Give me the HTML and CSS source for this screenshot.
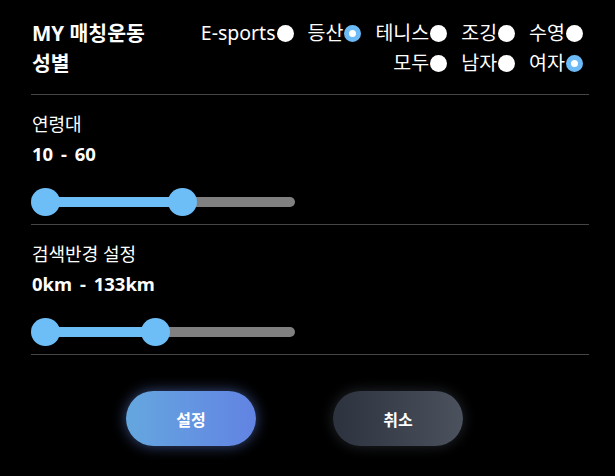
FILE: index.html
```html
<!DOCTYPE html>
<html lang="ko">
<head>
<meta charset="utf-8">
<link rel="stylesheet" href="styles.css">
</head>
<body>
<div class="panel">
  <div class="header">
    <div class="row">
      <div class="title">MY 매칭운동</div>
      <div class="options">
        <label class="opt">E-sports<span class="radio"></span></label>
        <label class="opt">등산<span class="radio checked"></span></label>
        <label class="opt">테니스<span class="radio"></span></label>
        <label class="opt">조깅<span class="radio"></span></label>
        <label class="opt">수영<span class="radio"></span></label>
      </div>
    </div>
    <div class="row">
      <div class="title">성별</div>
      <div class="options">
        <label class="opt">모두<span class="radio"></span></label>
        <label class="opt">남자<span class="radio"></span></label>
        <label class="opt">여자<span class="radio checked"></span></label>
      </div>
    </div>
  </div>

  <div class="section">
    <div class="label">연령대</div>
    <div class="value">10 - 60</div>
    <div class="slider">
      <div class="track"></div>
      <div class="fill" style="width:151px"></div>
      <div class="thumb" style="left:0px"></div>
      <div class="thumb" style="left:137px"></div>
    </div>
  </div>

  <div class="section">
    <div class="label">검색반경 설정</div>
    <div class="value">0km - 133km</div>
    <div class="slider">
      <div class="track"></div>
      <div class="fill" style="width:124px"></div>
      <div class="thumb" style="left:0px"></div>
      <div class="thumb" style="left:110px"></div>
    </div>
  </div>

  <div class="buttons">
    <button class="btn btn-primary">설정</button>
    <button class="btn btn-secondary">취소</button>
  </div>
</div>
</body>
</html>
```

FILE: styles.css
```css
html, body {
  margin: 0;
  padding: 0;
  background: #000;
}
body {
  font-family: "Noto Sans", "Noto Sans CJK KR", sans-serif;
  color: #fff;
  width: 615px;
  height: 476px;
  overflow: hidden;
}
.panel {
  padding: 18px 26px 0 31px;
}
.header {
  padding-bottom: 16px;
  border-bottom: 1px solid #464646;
}
.row {
  display: flex;
  justify-content: space-between;
  align-items: center;
  height: 30px;
}
.title {
  font-weight: 700;
  font-size: 20.5px;
  line-height: 30px;
  padding-left: 1px;
}
.options {
  display: flex;
  align-items: center;
  gap: 14px;
  padding-right: 6px;
}
.opt {
  display: flex;
  align-items: center;
  font-size: 19.5px;
  line-height: 30px;
  gap: 1px;
}
.radio {
  width: 17px;
  height: 17px;
  border-radius: 50%;
  background: #fff;
  box-sizing: border-box;
}
.radio.checked {
  border: 5px solid #6cbaf6;
}
.section {
  padding: 14px 0 8px 0;
  border-bottom: 1px solid #464646;
}
.label {
  font-size: 18px;
  line-height: 30px;
  padding-left: 1px;
}
.value {
  font-size: 18.5px;
  font-weight: 700;
  line-height: 30px;
  word-spacing: 3px;
  padding-left: 1px;
}
.slider {
  position: relative;
  width: 264px;
  height: 28px;
  margin-top: 19px;
}
.track {
  position: absolute;
  left: 1px;
  top: 9px;
  width: 263px;
  height: 10px;
  border-radius: 5px;
  background: #808080;
}
.fill {
  position: absolute;
  left: 1px;
  top: 9px;
  height: 10px;
  background: #6dbdf7;
}
.thumb {
  position: absolute;
  top: 0;
  width: 29px;
  height: 28px;
  border-radius: 50%;
  background: #6dbdf7;
}
.buttons {
  display: flex;
  gap: 77px;
  padding-left: 95px;
  margin-top: 36px;
}
.btn {
  width: 130px;
  height: 55px;
  border: none;
  border-radius: 28px;
  font-family: "Noto Sans", "Noto Sans CJK KR", sans-serif;
  font-weight: 700;
  font-size: 16px;
  color: #fff;
  cursor: pointer;
}
.btn-primary {
  background: linear-gradient(90deg, #65a7df, #6283e3);
  box-shadow: 0 0 14px rgba(105, 140, 235, 0.55);
}
.btn-secondary {
  background: linear-gradient(90deg, #2d333e, #4b515d);
  box-shadow: 0 0 14px rgba(120, 130, 150, 0.3);
}
```
